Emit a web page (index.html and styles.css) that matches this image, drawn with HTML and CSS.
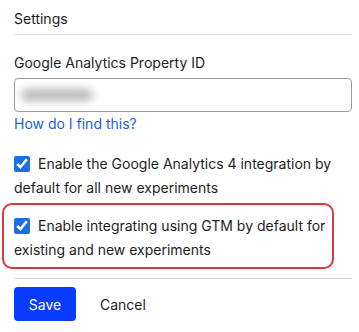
FILE: index.html
```html
<!DOCTYPE html>
<html>
<head>
<meta charset="utf-8">
<link rel="stylesheet" href="styles.css">
</head>
<body>
<div class="panel">
  <div class="header">Settings</div>
  <div class="field">
    <div class="label">Google Analytics Property ID</div>
    <div class="input"><span class="blur"></span></div>
    <a class="link" href="#">How do I find this?</a>
  </div>
  <label class="check first"><input type="checkbox" checked>Enable the Google Analytics 4 integration by default for all new experiments</label>
  <div class="highlight">
    <label class="check"><input type="checkbox" checked>Enable integrating using GTM by default for existing and new experiments</label>
  </div>
  <div class="actions">
    <button class="save">Save</button>
    <button class="cancel">Cancel</button>
  </div>
</div>
</body>
</html>
```
FILE: styles.css
```css
html, body { margin: 0; padding: 0; background: #fff; }
body { font-family: Inter, "Noto Sans", sans-serif; font-size: 14px; color: #1d1d1f; }
.panel { padding: 0 7px 0 14px; }
.header { line-height: 20px; padding: 9px 0 5px; border-bottom: 1px solid #d9d9d9; }
.field { margin-top: 18px; }
.label { line-height: 20px; }
.input { margin-top: 5px; height: 32px; border: 1px solid #9a9a9a; border-radius: 4px; display: flex; align-items: center; padding-left: 6px; }
.blur { display: block; width: 72px; height: 12px; background: #b8b8b8; border-radius: 6px; filter: blur(4px); }
.link { display: block; color: #2660d9; text-decoration: none; line-height: 20px; margin-top: 2px; }
.check { display: block; line-height: 24px; }
.check input { width: 16px; height: 16px; margin: 0 8px 0 0; vertical-align: -3px; accent-color: #1a6fe6; }
.first { margin-top: 18px; }
.highlight { margin: 3px 18px 0 -12px; border: 2px solid #d9383e; border-radius: 10px; padding: 9px 0 5px 10px; }
.actions { margin-top: 9px; border-top: 1px solid #d9d9d9; padding-top: 8px; display: flex; align-items: center; gap: 24px; }
.save { font: inherit; background: #0a3cff; color: #fff; border: 0; border-radius: 4px; width: 62px; height: 34px; }
.cancel { font: inherit; background: none; border: 0; padding: 0; color: #1d1d1f; }
```
